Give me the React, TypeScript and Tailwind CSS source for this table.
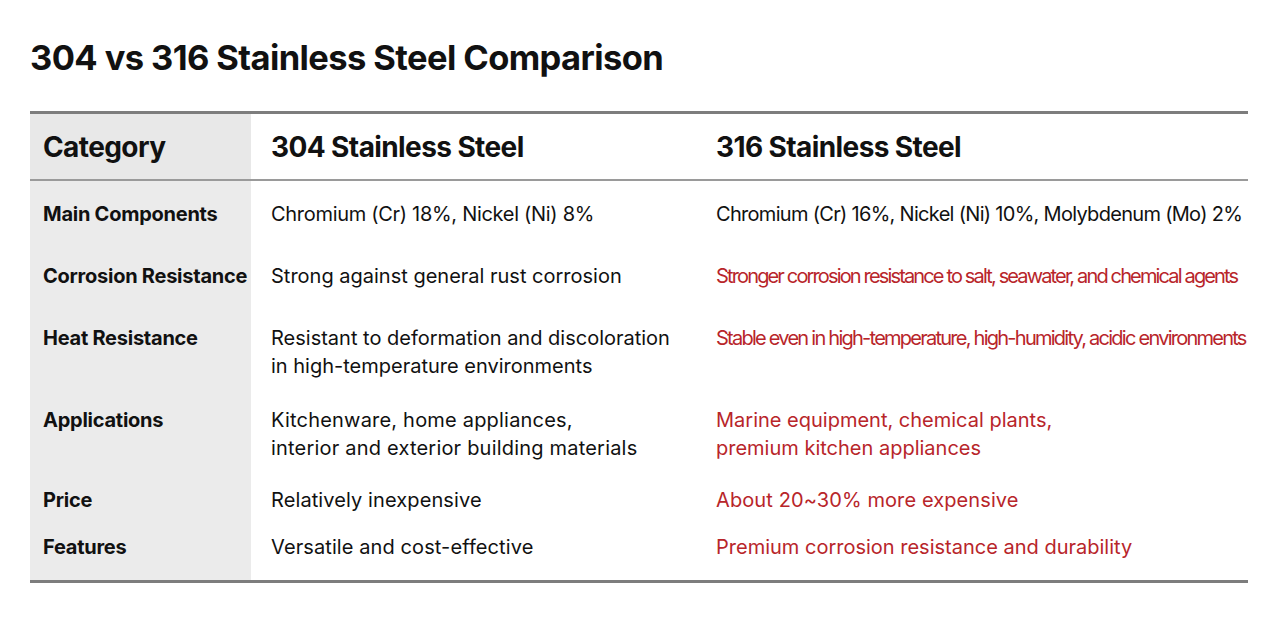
const rows = [
  {
    label: "Main Components",
    a: ["Chromium (Cr) 18%, Nickel (Ni) 8%"],
    b: ["Chromium (Cr) 16%, Nickel (Ni) 10%, Molybdenum (Mo) 2%"],
    red: false,
    aTrack: "tracking-[-0.3px]",
    bTrack: "tracking-[-0.7px]",
    pad: "pt-[19px]",
  },
  {
    label: "Corrosion Resistance",
    a: ["Strong against general rust corrosion"],
    b: ["Stronger corrosion resistance to salt, seawater, and chemical agents"],
    red: true,
    aTrack: "tracking-normal",
    bTrack: "tracking-[-1.85px]",
    pad: "pt-[34px]",
  },
  {
    label: "Heat Resistance",
    a: ["Resistant to deformation and discoloration", "in high-temperature environments"],
    b: ["Stable even in high-temperature, high-humidity, acidic environments"],
    red: true,
    aTrack: "tracking-normal",
    bTrack: "tracking-[-1.75px]",
    pad: "pt-[34px]",
  },
  {
    label: "Applications",
    a: ["Kitchenware, home appliances,", "interior and exterior building materials"],
    b: ["Marine equipment, chemical plants,", "premium kitchen appliances"],
    red: true,
    aTrack: "tracking-[0.2px]",
    bTrack: "tracking-normal",
    pad: "pt-[26px]",
  },
  {
    label: "Price",
    a: ["Relatively inexpensive"],
    b: ["About 20~30% more expensive"],
    red: true,
    aTrack: "tracking-[0.1px]",
    bTrack: "tracking-[0.1px]",
    pad: "pt-[24px]",
  },
  {
    label: "Features",
    a: ["Versatile and cost-effective"],
    b: ["Premium corrosion resistance and durability"],
    red: true,
    aTrack: "tracking-[0.1px]",
    bTrack: "tracking-normal",
    pad: "pt-[19px] pb-[19px]",
  },
];

const App = () => {
  return (
    <div className="min-h-[629px] bg-white font-['Inter',sans-serif] text-[#111]">
      <h1 className="pl-[30px] pt-[36px] text-[34.5px] font-bold leading-[44px] tracking-[-0.6px]">
        304 vs 316 Stainless Steel Comparison
      </h1>
      <div className="ml-[30px] mr-[32px] mt-[31px] border-t-[3px] border-b-[3px] border-[#7d7d7d]">
        <div className="grid grid-cols-[221px_445px_1fr] border-b-2 border-[#9a9a9a]">
          <div className="bg-[#e8e8e8] pl-[13px] h-[65px] flex items-center text-[28px] font-bold tracking-[-0.6px]">
            Category
          </div>
          <div className="pl-[20px] flex items-center text-[28px] font-bold tracking-[-0.6px]">
            304 Stainless Steel
          </div>
          <div className="pl-[20px] flex items-center text-[28px] font-bold tracking-[-0.6px]">
            316 Stainless Steel
          </div>
        </div>
        <div className="grid grid-cols-[221px_445px_1fr]">
          {rows.map((r) => (
            <div key={r.label} className="contents">
              <div
                className={`bg-[#ebebeb] pl-[13px] text-[20px] font-bold leading-[28px] tracking-[-0.25px] whitespace-nowrap ${r.pad}`}
              >
                {r.label}
              </div>
              <div className={`pl-[20px] text-[20px] leading-[28px] whitespace-nowrap ${r.aTrack} ${r.pad}`}>
                {r.a.map((t) => (
                  <div key={t}>{t}</div>
                ))}
              </div>
              <div
                className={`pl-[20px] text-[20px] leading-[28px] whitespace-nowrap ${
                  r.red ? "text-[#b8252a]" : ""
                } ${r.bTrack} ${r.pad}`}
              >
                {r.b.map((t) => (
                  <div key={t}>{t}</div>
                ))}
              </div>
            </div>
          ))}
        </div>
      </div>
    </div>
  );
};

export default App;
